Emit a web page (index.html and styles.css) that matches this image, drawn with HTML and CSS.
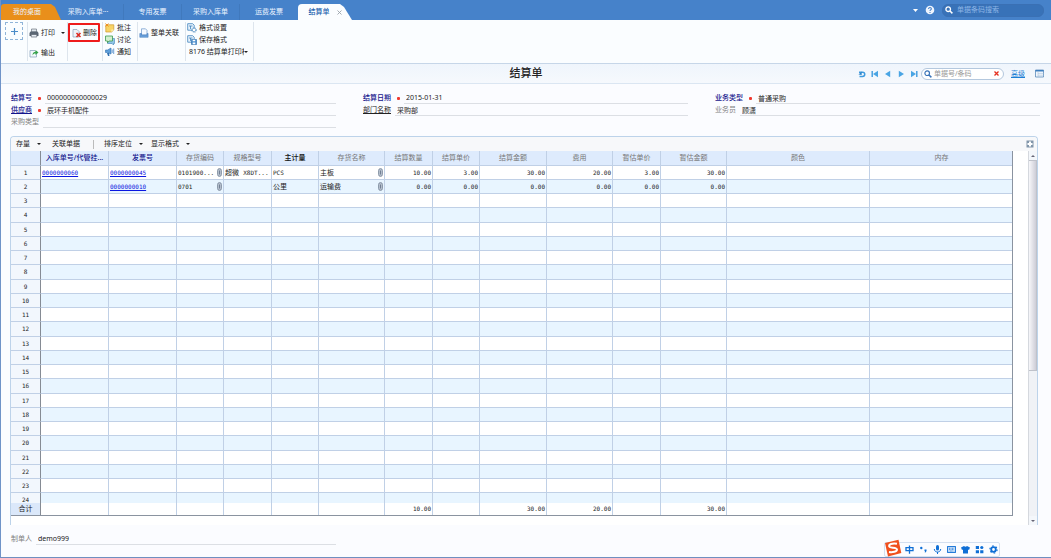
FILE: index.html
```html
<!DOCTYPE html>
<html lang="zh-CN">
<head>
<meta charset="utf-8">
<title>结算单</title>
<link rel="stylesheet" href="styles.css">
</head>
<body>
<div class="app">
  <header class="topbar">
    <nav class="tabs">
      <a class="tab tab-home" href="#">我的桌面</a>
      <a class="tab tab-wide" href="#">采购入库单···</a>
      <a class="tab" href="#">专用发票</a>
      <a class="tab" href="#">采购入库单</a>
      <a class="tab tab-last" href="#">运费发票</a>
      <a class="tab tab-active" href="#">结算单<svg width="5" height="5" viewBox="0 0 5 5"><path d="M.5.5l4 4M4.500.5l-4 4" stroke="#9aa2aa" stroke-width=".9"/></svg></a>
    </nav>
    <div class="top-tools">
      <button class="plain" aria-label="菜单"><svg width="5" height="3" viewBox="0 0 5 3"><path d="M0 0h5L2.500 3z" fill="#fff"/></svg></button>
      <button class="plain" aria-label="帮助"><svg width="10" height="10" viewBox="0 0 10 10"><circle cx="5" cy="5" r="4.300" fill="#eef4fd"/><path d="M3.600 4C3.600 2 6.500 2.200 6.300 4 6.200 5 5 4.900 5 6M5 7v1" fill="none" stroke="#4480c8" stroke-width="1.100"/></svg></button>
      <label class="search search-dark">
        <svg width="8" height="8" viewBox="0 0 8 8"><circle cx="3.200" cy="3.200" r="2.300" fill="none" stroke="#fff" stroke-width="1.300"/><path d="M5 5l2.400 2.400" stroke="#fff" stroke-width="1.500"/></svg>
        <input type="text" placeholder="单据条码搜索" aria-label="单据条码搜索">
      </label>
    </div>
  </header>

  <div class="ribbon">
    <button class="add" aria-label="添加"><svg width="9" height="9" viewBox="0 0 9 9"><path d="M4.500 1v7M1 4.500h7" stroke="#4b8cc8" stroke-width="1.200"/></svg></button>
    <div class="group group-print">
      <button class="cmd cmd-tall"><svg width="10" height="10" viewBox="0 0 10 10"><path d="M2.500 1h5v3h-5z" fill="#dfe5ec" stroke="#6d7680" stroke-width=".7"/><path d="M1.500 3.500h7L9.500 5v3h-9V5z" fill="#596573"/><path d="M2.200 6.500h5.600V9H2.200z" fill="#e7edf4" stroke="#4b5561" stroke-width=".6"/></svg>打印<span class="caret"></span></button>
      <button class="cmd cmd-export"><svg width="10" height="10" viewBox="0 0 10 10"><path d="M1 2.500h5l1.500 1.700V9H1z" fill="#f5f9fd" stroke="#7f9cb8" stroke-width=".7"/><path d="M3.500 7.500c0-3 1.500-3.800 3-3.800V2L9.500 4.500l-3 2.600V5.500c-1.500 0-2.200.5-3 2z" fill="#37a34c"/></svg>输出</button>
    </div>
    <div class="group group-delete">
      <button class="cmd cmd-marked"><svg width="10" height="10" viewBox="0 0 10 10"><path d="M1 1.500h4l2 2V9H1z" fill="#eef3f9" stroke="#8ba0b8" stroke-width=".7"/><path d="M4.500 5l4 4M8.500 5l-4 4" stroke="#e0251b" stroke-width="1.500"/></svg>删除</button>
    </div>
    <div class="group group-note">
      <button class="cmd"><svg width="10" height="10" viewBox="0 0 10 10"><path d="M.8 1.800h8v5L6.500 9H.8z" fill="#f8d465" stroke="#cf9a2f" stroke-width=".7"/><path d="M8.800 6.500H6.400V9z" fill="#fff0b0"/><path d="M.5.500l3 3M3.500.5l-3 3" stroke="#ef8a1c" stroke-width=".9"/></svg>批注</button>
      <button class="cmd"><svg width="10" height="10" viewBox="0 0 10 10"><path d="M2.500 3.500h7v5h-1V10L7 8.500H2.500z" fill="#8fc5e8" stroke="#3f85b8" stroke-width=".6"/><path d="M.5 1h7v5H4L2.500 7.800V6h-2z" fill="#d3efcf" stroke="#3d9a4e" stroke-width=".8"/></svg>讨论</button>
      <button class="cmd"><svg width="10" height="10" viewBox="0 0 10 10"><path d="M.5 3h2L6 1v6L2.500 5.500h-2z" fill="#5d9fdb" stroke="#2f70b0" stroke-width=".6"/><path d="M2 6l1 3h1.500L4 6" fill="#2f70b0"/><path d="M7.200 2.500v3.500M8.700 1.500v5.500" stroke="#4b88c6" stroke-width=".8"/></svg>通知</button>
    </div>
    <div class="group group-link">
      <button class="cmd cmd-tall"><svg width="10" height="10" viewBox="0 0 10 10"><path d="M2.500.8h4l1.500 1.500V7H2.500z" fill="#f4f9ff" stroke="#7ba2cf" stroke-width=".8"/><path d="M.8 5.500h1.700V7h5.600V5.500h1v3.800H.8z" fill="#6ba2dc" stroke="#3c77b8" stroke-width=".5"/></svg>整单关联</button>
    </div>
    <div class="group group-format">
      <button class="cmd"><svg width="10" height="10" viewBox="0 0 10 10"><path d="M.7.7h5l1.500 1.500v5H.7z" fill="#e9f4fd" stroke="#3f83bd" stroke-width=".8"/><path d="M2 3h3.500M3.500 3v3" stroke="#3f83bd" stroke-width=".8"/><circle cx="7" cy="7" r="2" fill="#fff" stroke="#4484bb" stroke-width="1.200" stroke-dasharray="1 .5"/></svg>格式设置</button>
      <button class="cmd"><svg width="10" height="10" viewBox="0 0 10 10"><path d="M.7.7h5l1.500 1.500v5H.7z" fill="#e9f4fd" stroke="#3f83bd" stroke-width=".8"/><path d="M2 3h3.500M3.500 3v3" stroke="#3f83bd" stroke-width=".8"/><path d="M4.500 4.500h5v5h-5z" fill="#4c91cf" stroke="#2b6ca9" stroke-width=".6"/><path d="M5.700 4.800h2.500v1.500H5.700zM5.700 7.500h2.600v1.800H5.700z" fill="#fff"/></svg>保存格式</button>
      <div class="template"><select aria-label="打印模板"><option>8176 结算单打印模版</option></select><span class="caret"></span></div>
    </div>
  </div>

  <div class="titlebar">
    <span class="title-pad"></span>
    <h1>结算单</h1>
    <div class="title-tools">
      <button class="plain" aria-label="刷新"><svg width="8" height="8" viewBox="0 0 8 8"><path d="M1 2.200h3.500c3 0 3 4.300 0 4.300H1.500" fill="none" stroke="#3f9ade" stroke-width="1.500"/><path d="M.5 4.500L3.700 1.500V5z" fill="#2c86cc"/></svg></button>
      <button class="plain" aria-label="首张"><svg width="8" height="8" viewBox="0 0 8 8"><path d="M1.200 1v6" stroke="#3f9ade" stroke-width="1.400"/><path d="M7 .8v6.400L2 4z" fill="#4aa5e4"/></svg></button>
      <button class="plain" aria-label="上张"><svg width="8" height="8" viewBox="0 0 8 8"><path d="M6.200.8v6.400L1 4z" fill="#4aa5e4"/></svg></button>
      <button class="plain" aria-label="下张"><svg width="8" height="8" viewBox="0 0 8 8"><path d="M1.800.8v6.400L7 4z" fill="#4aa5e4"/></svg></button>
      <button class="plain" aria-label="末张"><svg width="8" height="8" viewBox="0 0 8 8"><path d="M6.800 1v6" stroke="#3f9ade" stroke-width="1.400"/><path d="M1 .8v6.400L6 4z" fill="#4aa5e4"/></svg></button>
      <label class="search search-light">
        <svg width="8" height="8" viewBox="0 0 8 8"><circle cx="3.200" cy="3.200" r="2.300" fill="none" stroke="#3a74b8" stroke-width="1.200"/><path d="M5 5l2.400 2.400" stroke="#3a74b8" stroke-width="1.500"/></svg>
        <input type="text" placeholder="单据号/条码" aria-label="单据号/条码">
        <svg width="5" height="5" viewBox="0 0 5 5"><path d="M.5.5l4 4M4.500.5l-4 4" stroke="#e5301f" stroke-width="1.300"/></svg>
      </label>
      <a class="advanced" href="#">高级</a>
      <button class="plain" aria-label="列表"><svg width="9" height="9" viewBox="0 0 9 9"><path d="M.5 1h8v7h-8z" fill="#f2f7fd" stroke="#5c8cba" stroke-width=".8"/><path d="M.5 1h8v1.500h-8z" fill="#3d7fc0"/><path d="M3 2.500V8M3 4.400h5.500M3 6.200h5.500" stroke="#a9c2dc" stroke-width=".6"/></svg></button>
    </div>
  </div>

  <form class="fields">
    <div class="field"><label class="key" for="f1">结算号</label><i class="star"></i><input id="f1" value="000000000000029"></div>
    <div class="field"><label class="key" for="f2">结算日期</label><i class="star"></i><input id="f2" value="2015-01-31"></div>
    <div class="field"><label class="key" for="f3">业务类型</label><i class="star"></i><input id="f3" value="普通采购"></div>
    <div class="field"><label class="key linked" for="f4">供应商</label><i class="star"></i><input id="f4" value="辰环手机配件"></div>
    <div class="field"><label class="linked dark" for="f5">部门名称</label><input id="f5" value="采购部"></div>
    <div class="field"><label for="f6">业务员</label><input id="f6" value="顾潇"></div>
    <div class="field"><label for="f7">采购类型</label><input id="f7"></div>
  </form>

  <section class="panel">
    <div class="gridbar">
      <button class="plain menu">存量<span class="caret"></span></button>
      <button class="plain">关联单据</button>
      <span class="bar-sep"></span>
      <button class="plain menu">排序定位<span class="caret"></span></button>
      <button class="plain menu">显示格式<span class="caret"></span></button>
      <button class="plain expand" aria-label="全屏"><svg width="8" height="8" viewBox="0 0 8 8"><path d="M.5.5h7v7h-7z" fill="#8296aa"/><path d="M3 1.500h2V3h1.500v2H5v1.500H3V5H1.500V3H3z" fill="#fff"/></svg></button>
    </div>
    <div class="gridwrap">
      <div class="gridview">
        <table>
          <colgroup><col class="w30"><col class="w68"><col class="w68"><col class="w47"><col class="w48"><col class="w47"><col class="w66"><col class="w48"><col class="w47"><col class="w67"><col class="w66"><col class="w48"><col class="w66"><col class="w143"><col class="w143"></colgroup>
          <thead><tr><th></th><th class="key">入库单号/代管挂...</th><th class="key">发票号</th><th>存货编码</th><th>规格型号</th><th class="must">主计量</th><th>存货名称</th><th>结算数量</th><th>结算单价</th><th>结算金额</th><th>费用</th><th>暂估单价</th><th>暂估金额</th><th>颜色</th><th>内存</th></tr></thead>
          <tbody id="rows"></tbody>
          <tfoot><tr><th>合计</th><td></td><td></td><td></td><td></td><td></td><td></td><td class="num">10.00</td><td></td><td class="num">30.00</td><td class="num">20.00</td><td></td><td class="num">30.00</td><td></td><td></td></tr></tfoot>
        </table>
      </div>
      <div class="scroll">
        <span class="scroll-arrow up"></span>
        <span class="thumb"></span>
        <span class="track"></span>
        <span class="scroll-arrow down"></span>
      </div>
    </div>
  </section>

  <footer class="fields">
    <div class="field"><label for="f8">制单人</label><input id="f8" value="demo999"></div>
  </footer>

  <div class="ime">
    <svg class="ime-logo" width="18" height="18" viewBox="0 0 18 18"><path d="M1 4L14.500.8 17.300 14 4 17.500z" fill="#f0501e"/><path d="M13 4.800C8 4 4.500 5.300 5.300 7.700c.7 1.700 7.500.2 7.700 2.800.1 2.300-4.500 3-8 2.500" fill="none" stroke="#fff" stroke-width="2"/></svg>
    <svg width="9" height="9" viewBox="0 0 9 9"><path d="M1 2.700h7v3H1zM4.500.5v8.300" fill="none" stroke="#0f6fd6" stroke-width="1.300"/></svg>
    <svg width="9" height="9" viewBox="0 0 9 9"><circle cx="2.300" cy="3" r="1.200" fill="#0f6fd6"/><path d="M5.500 4.500h2c.3 1.800-.3 2.800-1.700 3.200l.3-1.500h-.6z" fill="#0f6fd6"/></svg>
    <svg width="9" height="9" viewBox="0 0 9 9"><rect x="3" y="0" width="3" height="5.500" rx="1.500" fill="#0f6fd6"/><path d="M1.300 4c0 4 6.400 4 6.400 0M4.500 7v2" fill="none" stroke="#0f6fd6" stroke-width="1"/></svg>
    <svg width="9" height="9" viewBox="0 0 9 9"><rect x=".6" y="1.600" width="7.800" height="5.800" fill="#d9e9fb" stroke="#0f6fd6" stroke-width="1"/><path d="M2 3.300h5M2 4.600h5M2.800 6h3.400" stroke="#0f6fd6" stroke-width=".7" stroke-dasharray="1 .5"/></svg>
    <svg width="9" height="9" viewBox="0 0 9 9"><path d="M3 1c.8 1 2.200 1 3 0l3 1.500L8 5l-1-.5V8.500H2v-4L1 5 0 2.500z" fill="#0f6fd6"/></svg>
    <svg width="9" height="9" viewBox="0 0 9 9"><path d="M.8 1h3.200v3H.8zM.8 5.200h3.200v3H.8zM5.200 5.200h3.200v3H5.200z" fill="#0f6fd6"/><circle cx="6.800" cy="2.500" r="1.600" fill="#0f6fd6"/></svg>
    <svg width="9" height="9" viewBox="0 0 9 9"><circle cx="4.500" cy="4.500" r="2.300" fill="none" stroke="#0f6fd6" stroke-width="1.800"/><circle cx="4.500" cy="4.500" r="3.600" fill="none" stroke="#0f6fd6" stroke-width="1.200" stroke-dasharray="1.600 2.170"/></svg>
  </div>
</div>
<script src="grid.js"></script>
</body>
</html>
```
FILE: styles.css
```css
* { box-sizing: border-box; }

body {
  margin: 0;
  background: #fbfcff;
  color: #222;
  font: 7px/10px "Noto Sans", "Noto Sans CJK SC", sans-serif;
}

button, input, select {
  margin: 0;
  padding: 0;
  border: 0;
  background: none;
  color: inherit;
  font: inherit;
}

svg { display: block; flex: none; }

.app {
  position: relative;
  display: flex;
  flex-direction: column;
  min-height: 100vh;
  border-left: 1px solid #6f93c8;
  border-bottom: 1px solid #6f8fc0;
}

.plain { display: flex; align-items: center; white-space: nowrap; }

.caret {
  border: 2px solid transparent;
  border-top-color: #222;
  border-bottom: 0;
}

/* Tabs */
.topbar {
  display: flex;
  justify-content: space-between;
  height: 20px;
  background: #4682ca;
}

.tabs { display: flex; padding-top: 4px; }

.tab {
  display: flex;
  align-items: center;
  justify-content: center;
  width: 58px;
  border-right: 1px solid #4079bd;
  color: #eaf3ff;
  text-decoration: none;
  white-space: nowrap;
}

.tab-home {
  width: 60px;
  padding-right: 8px;
  border: 0;
  border-radius: 3px 0 0 0;
  background: #e98f1b;
  clip-path: polygon(0 0, 50px 0, 54px 3px, 60px 100%, 0 100%);
}

.tab-wide { width: 63px; padding-right: 8px; }
.tab-last { border-right: 0; }

.tab-active {
  gap: 7px;
  width: 54px;
  padding-right: 0;
  border: 0;
  border-radius: 4px 0 0 0;
  background: #fbfdff;
  color: #1c5fae;
  font-weight: 500;
  clip-path: polygon(0 0, 42px 0, 46px 3px, 54px 100%, 0 100%);
}

.top-tools { display: flex; align-items: center; gap: 7px; padding-right: 7px; }

.search { display: flex; align-items: center; border-radius: 6px; }
.search input { flex: 1; min-width: 0; outline: 0; }

.search-dark {
  gap: 4px;
  width: 102px;
  height: 13px;
  padding: 0 2px;
  border: 1px solid #3a70b4;
  background: #3872b8;
}

.search-dark input::placeholder { color: #8db5e6; }

/* Ribbon */
.ribbon {
  display: flex;
  height: 43px;
  padding: 2px 4px;
  background: #fafdff;
}

.add {
  display: flex;
  align-items: center;
  justify-content: center;
  width: 18px;
  height: 18px;
  margin-right: 4px;
  border: 1px dashed #8fb4d8;
}

.group {
  display: flex;
  flex-direction: column;
  border-left: 1px solid #dde5ed;
}

.cmd {
  display: flex;
  align-items: center;
  gap: 2px;
  height: 12px;
  white-space: nowrap;
}

.cmd .caret { margin-left: 4px; }
.cmd-tall { height: 22px; }
.cmd-export { height: 17px; }
.group-print { width: 40px; padding-left: 1px; }
.group-delete { width: 35px; }
.cmd-marked { width: 32px; height: 19px; margin-top: 1px; padding-left: 2px; border: 2px solid #ee1c1c; border-radius: 1px; gap: 1px; }
.group-note { width: 35px; padding-left: 2px; }
.group-link { width: 48px; padding-left: 1px; }
.group-format { width: 69px; padding-left: 1px; border-right: 1px solid #dde5ed; }
.template { display: flex; align-items: center; height: 12px; padding-left: 2px; }

.template select {
  width: 55px;
  overflow: hidden;
  appearance: none;
  text-overflow: clip;
}

/* Title */
.titlebar {
  display: flex;
  align-items: center;
  height: 21px;
  border-top: 1px solid #c6d6e8;
  border-bottom: 1px solid #dbe6f2;
  background: linear-gradient(#eff5fc, #f6f9fd);
}

.title-pad { flex: 1; padding-left: 7px; }
h1 { margin: 0 0 2px; font-size: 11px; font-weight: 500; line-height: 16px; }

.title-tools {
  display: flex;
  flex: 1;
  align-items: center;
  justify-content: flex-end;
  gap: 5px;
  padding-right: 7px;
}

.search-light {
  gap: 2px;
  width: 83px;
  height: 12px;
  margin-left: -2px;
  padding: 0 4px 0 2px;
  border: 1px solid #b4c8de;
  background: #fff;
}

.search-light input::placeholder { color: #999; }
.advanced { margin: 0 5px 0 2px; color: #1c7fd4; }

/* Form */
.fields {
  display: grid;
  grid-template-columns: repeat(3, 1fr);
  column-gap: 27px;
  padding: 8px 11px 8px 10px;
}

.field { display: flex; align-items: center; height: 12px; }
.field label { color: #808080; white-space: nowrap; }
.field .dark { color: #222; }
.field .key, th.key { color: #14148c; }
.field .key { font-weight: 500; }
.linked { text-decoration: underline; }

.star {
  width: 3px;
  height: 3px;
  margin-left: 6px;
  border-radius: 1px;
  background: #f03a30;
}

.field input {
  flex: 1;
  min-width: 0;
  height: 11px;
  margin-left: 4px;
  padding-left: 2px;
  border-bottom: 1px solid #dcdfe4;
}

/* Grid */
.panel {
  margin: 0 13px 0 9px;
  border: 1px solid #bdd3ea;
  border-bottom: 0;
  border-radius: 4px 4px 0 0;
  background: #fff;
}

.gridbar {
  display: flex;
  align-items: center;
  height: 14px;
  padding: 0 3px 0 5px;
  border-radius: 4px 4px 0 0;
  background: #f7f8fa;
}

.menu { gap: 7px; margin-right: 8px; }
.gridbar .plain:first-child { margin-right: 11px; }
.bar-sep { width: 1px; height: 9px; margin: 0 10px 0 13px; background: #bbb; }
.gridbar .expand { margin-left: auto; }

.gridwrap { display: flex; }

.gridview {
  flex: 1;
  height: 365px;
  margin-right: 15px;
  overflow: hidden;
  border-right: 1px solid #8a93a0;
  border-bottom: 1px solid #8a93a0;
}

table {
  width: 100%;
  border-spacing: 0;
  table-layout: fixed;
}

.w30 { width: 30px; }
.w47 { width: 47px; }
.w48 { width: 48px; }
.w66 { width: 66px; }
.w67 { width: 67px; }
.w68 { width: 68px; }
.w143 { width: 143px; }

th, td {
  height: 14px;
  padding: 0 1px;
  overflow: hidden;
  border-right: 1px solid #c0d0e6;
  border-bottom: 1px solid #c0d0e6;
  white-space: nowrap;
}

th { font-weight: 400; text-align: center; }
tr > :first-child { border-right-color: #858b94; }
tr > :last-child { border-right: 0; }
thead th { height: 15px; background: #deebfd; color: #777; }
thead .key { font-weight: 500; }
thead .must { color: #111; font-weight: 500; }

tbody th { background: #f2f7fd; font-family: "DejaVu Sans Mono", monospace; font-size: 6px; }
tbody tr:nth-child(even) td { background: #e8f5ff; }
tbody tr:nth-child(4n) > * { height: 15px; }
td { font-family: "DejaVu Sans Mono", "Noto Sans CJK SC", monospace; }
.code, .num, td a { font-size: 6px; }
.num { text-align: right; }
td a { color: #0b16e0; }
.cell { display: flex; align-items: center; justify-content: space-between; }

tfoot { position: sticky; bottom: 0; }
tfoot th, tfoot td { height: 12px; border-bottom: 0; background: #fff; }
tfoot th { background: #dbe8fa; border-right-color: #dbe8fa; }

/* Scroll bar */
.scroll {
  display: flex;
  flex-direction: column;
  width: 9px;
  height: 374px;
  border-left: 1px solid #d5d8de;
  background: #f0f2f6;
}

.scroll-arrow { display: flex; align-items: center; justify-content: center; height: 9px; background: #f4f7fb; }
.scroll-arrow::before { content: ""; border: 2px solid transparent; }
.up::before { border-bottom-color: #667; border-top: 0; }
.down::before { border-top-color: #667; border-bottom: 0; }

.thumb {
  flex: 211;
  border: 1px solid #bfc2ca;
  border-left: 0;
  background: linear-gradient(90deg, #f7f7fa, #cdcdd7);
}

.track { flex: 146; }

/* Input method bar floating over the page */
.ime {
  position: absolute;
  right: 51px;
  bottom: 0;
  display: flex;
  align-items: center;
  gap: 5px;
  height: 15px;
  padding-right: 1px;
  border: 1px solid #d3dff0;
  border-radius: 2px;
  background: #fbfcff;
}

.ime-logo { margin: -3px -2px 0 -1px; }
```
FILE: grid.js
```js
const clip = '<svg width="5" height="9" viewBox="0 0 5 9"><rect x=".6" y=".6" width="3.800" height="7.800" rx="1.900" fill="#b9c3d0" stroke="#7c8a9c" stroke-width=".9"/><path d="M2.500 2.500v4" stroke="#5f6f84" stroke-width=".8"/></svg>';
const withClip = (cls, text) => `<td><div class="cell"><span class="${cls}">${text}</span>${clip}</div></td>`;
const link = text => `<td>${text ? `<a href="#">${text}</a>` : ''}</td>`;
const text = value => `<td>${value}</td>`;
const nums = values => values.map(v => `<td class="num">${v}</td>`).join('');

const data = [
  link('0000000060') + link('0000000045') + withClip('code', '0101900...') +
    text('超微 <span class="code">X8DT...</span>') + '<td class="code">PCS</td>' + withClip('name', '主板') +
    nums(['10.00', '3.00', '30.00', '20.00', '3.00', '30.00']) + text('') + text(''),
  link('') + link('0000000010') + withClip('code', '0701') +
    text('') + text('公里') + withClip('name', '运输费') +
    nums(['0.00', '0.00', '0.00', '0.00', '0.00', '0.00']) + text('') + text('')
];

let html = '';
for (let i = 0; i < 24; i++) {
  html += `<tr><th>${i + 1}</th>${data[i] || text('').repeat(14)}</tr>`;
}
document.getElementById('rows').innerHTML = html;
```
